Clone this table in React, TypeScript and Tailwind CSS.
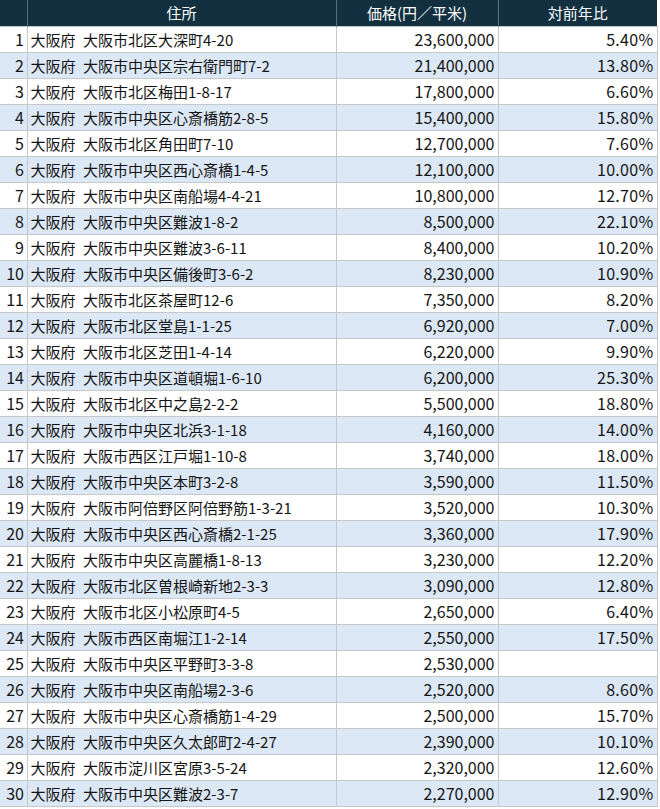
const rows: [string, string, string][] = [
  ['大阪市北区大深町4-20', '23,600,000', '5.40%'],
  ['大阪市中央区宗右衛門町7-2', '21,400,000', '13.80%'],
  ['大阪市北区梅田1-8-17', '17,800,000', '6.60%'],
  ['大阪市中央区心斎橋筋2-8-5', '15,400,000', '15.80%'],
  ['大阪市北区角田町7-10', '12,700,000', '7.60%'],
  ['大阪市中央区西心斎橋1-4-5', '12,100,000', '10.00%'],
  ['大阪市中央区南船場4-4-21', '10,800,000', '12.70%'],
  ['大阪市中央区難波1-8-2', '8,500,000', '22.10%'],
  ['大阪市中央区難波3-6-11', '8,400,000', '10.20%'],
  ['大阪市中央区備後町3-6-2', '8,230,000', '10.90%'],
  ['大阪市北区茶屋町12-6', '7,350,000', '8.20%'],
  ['大阪市北区堂島1-1-25', '6,920,000', '7.00%'],
  ['大阪市北区芝田1-4-14', '6,220,000', '9.90%'],
  ['大阪市中央区道頓堀1-6-10', '6,200,000', '25.30%'],
  ['大阪市北区中之島2-2-2', '5,500,000', '18.80%'],
  ['大阪市中央区北浜3-1-18', '4,160,000', '14.00%'],
  ['大阪市西区江戸堀1-10-8', '3,740,000', '18.00%'],
  ['大阪市中央区本町3-2-8', '3,590,000', '11.50%'],
  ['大阪市阿倍野区阿倍野筋1-3-21', '3,520,000', '10.30%'],
  ['大阪市中央区西心斎橋2-1-25', '3,360,000', '17.90%'],
  ['大阪市中央区高麗橋1-8-13', '3,230,000', '12.20%'],
  ['大阪市北区曽根崎新地2-3-3', '3,090,000', '12.80%'],
  ['大阪市北区小松原町4-5', '2,650,000', '6.40%'],
  ['大阪市西区南堀江1-2-14', '2,550,000', '17.50%'],
  ['大阪市中央区平野町3-3-8', '2,530,000', ''],
  ['大阪市中央区南船場2-3-6', '2,520,000', '8.60%'],
  ['大阪市中央区心斎橋筋1-4-29', '2,500,000', '15.70%'],
  ['大阪市中央区久太郎町2-4-27', '2,390,000', '10.10%'],
  ['大阪市淀川区宮原3-5-24', '2,320,000', '12.60%'],
  ['大阪市中央区難波2-3-7', '2,270,000', '12.90%'],
];

export default function App() {
  return (
    <div
      className="w-[660px] h-[809px] bg-white text-[#141414] overflow-hidden"
      style={{ fontFamily: '"Noto Sans CJK JP", "Noto Sans", sans-serif' }}
    >
      <table className="w-[657px] border-collapse table-fixed">
        <colgroup>
          <col className="w-[27px]" />
          <col className="w-[309px]" />
          <col className="w-[162px]" />
          <col className="w-[159px]" />
        </colgroup>
        <thead>
          <tr className="h-[26px] bg-[#12303f] text-white text-[15px] leading-none">
            <th className="border-r border-[#5a6f7b] font-normal"></th>
            <th className="border-r border-[#5a6f7b] font-normal">住所</th>
            <th className="border-r border-[#5a6f7b] font-normal">価格(円／平米)</th>
            <th className="font-normal">対前年比</th>
          </tr>
        </thead>
        <tbody>
          {rows.map(([addr, price, ratio], i) => (
            <tr
              key={i}
              className={`h-[26px] text-[15px] leading-none ${i % 2 === 1 ? 'bg-[#dce8f5]' : 'bg-white'}`}
            >
              <td className="border border-[#c6c9cc] border-l-0 text-right pr-[3px] p-0 text-[16px] tracking-[-0.3px]">
                {i + 1}
              </td>
              <td className="border border-[#c6c9cc] pl-[3px] p-0 whitespace-nowrap">
                大阪府{'\u2002'}{addr}
              </td>
              <td className="border border-[#c6c9cc] text-right pr-[3px] p-0 text-[16px]">
                {price}
              </td>
              <td className="border border-[#c6c9cc] text-right pr-[3px] p-0 text-[16px] tracking-[0.3px]">
                {ratio}
              </td>
            </tr>
          ))}
        </tbody>
      </table>
    </div>
  );
}
